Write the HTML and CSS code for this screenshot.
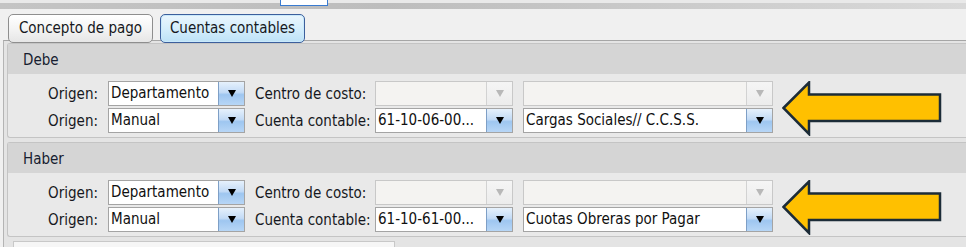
FILE: index.html
```html
<!DOCTYPE html>
<html lang="es">

<head>
    <meta charset="UTF-8">
    <meta name="viewport" content="width=device-width, initial-scale=1.0">
    <title>Cuentas contables</title>
    <link rel="stylesheet" href="styles.css">
</head>

<body>

    <div class="topbar">
        <div class="topbox"></div>
    </div>

    <div class="tabs">
        <span class="tab">Concepto de pago</span>
        <span class="tab active">Cuentas contables</span>
    </div>

    <div class="panel">
        <!-- Debe -->
        <div class="group">
            <div class="group-title">Debe</div>
            <div class="group-body">
                <span class="lbl right">Origen:</span>
                <div class="combo"><span class="combo-text">Departamento</span><span class="combo-btn"></span></div>
                <span class="lbl">Centro de costo:</span>
                <div class="combo off"><span class="combo-text"></span><span class="combo-btn"></span></div>
                <div class="combo off"><span class="combo-text"></span><span class="combo-btn"></span></div>
                <svg class="arrow" width="160" height="55" viewBox="0 0 160 55">
                    <path d="M1.5 27 L27 1.5 L27 13.5 L158 13.5 L158 40 L27 40 L27 53 Z" fill="#ffc000" stroke="#1c2c38" stroke-width="2.5" stroke-linejoin="miter" />
                </svg>

                <span class="lbl right">Origen:</span>
                <div class="combo"><span class="combo-text">Manual</span><span class="combo-btn"></span></div>
                <span class="lbl">Cuenta contable:</span>
                <div class="combo"><span class="combo-text">61-10-06-00...</span><span class="combo-btn"></span></div>
                <div class="combo"><span class="combo-text">Cargas Sociales// C.C.S.S.</span><span class="combo-btn"></span></div>
            </div>
        </div>

        <!-- Haber -->
        <div class="group">
            <div class="group-title">Haber</div>
            <div class="group-body">
                <span class="lbl right">Origen:</span>
                <div class="combo"><span class="combo-text">Departamento</span><span class="combo-btn"></span></div>
                <span class="lbl">Centro de costo:</span>
                <div class="combo off"><span class="combo-text"></span><span class="combo-btn"></span></div>
                <div class="combo off"><span class="combo-text"></span><span class="combo-btn"></span></div>
                <svg class="arrow" width="160" height="55" viewBox="0 0 160 55">
                    <path d="M1.5 27 L27 1.5 L27 13.5 L158 13.5 L158 40 L27 40 L27 53 Z" fill="#ffc000" stroke="#1c2c38" stroke-width="2.5" stroke-linejoin="miter" />
                </svg>

                <span class="lbl right">Origen:</span>
                <div class="combo"><span class="combo-text">Manual</span><span class="combo-btn"></span></div>
                <span class="lbl">Cuenta contable:</span>
                <div class="combo"><span class="combo-text">61-10-61-00...</span><span class="combo-btn"></span></div>
                <div class="combo"><span class="combo-text">Cuotas Obreras por Pagar</span><span class="combo-btn"></span></div>
            </div>
        </div>

        <div class="next"></div>
    </div>

</body>

</html>
```

FILE: styles.css
```css
body {
    margin: 0;
    background-color: #f0f0f0;
    font-family: "DejaVu Sans Condensed", "DejaVu Sans", sans-serif;
    font-stretch: condensed;
    font-size: 15px;
    color: #161821;
    overflow: hidden;
}

.topbar {
    height: 10px;
    padding-left: 280px;
    background:
        linear-gradient(to bottom, #e9e9e9 0 3px, transparent 3px 9px, #f0f0f0 9px),
        linear-gradient(to right, #c4c4c4, #bdbdbd 40%, #d9d9d9);
}

.topbox {
    width: 46px;
    height: 5px;
    border: 1px solid #3a7bd0;
    border-top: none;
    background-color: #fff;
}

.tabs {
    display: flex;
    gap: 7px;
    padding: 4px 0 0 8px;
    margin-bottom: -3px;
    position: relative;
    z-index: 1;
}

.tab {
    box-sizing: border-box;
    height: 29px;
    width: 145px;
    padding-top: 4px;
    text-align: center;
    border: 1px solid #8e8e8e;
    border-radius: 5px;
    background: linear-gradient(#ffffff, #f4f4f4 50%, #e6e6e6);
}

.tab.active {
    border-color: #3c5f9c;
    background: linear-gradient(#eaf6fd, #d5eefc 50%, #bde2f7);
    box-shadow: inset 0 0 0 1px #c9e9fb;
}

.panel {
    margin-left: 3px;
    border-top: 1px solid #a6a6a6;
    border-left: 1px solid #b4b4b4;
    background-color: #e4e4e4;
    padding: 2px 0 0 3px;
}

.group {
    border: 1px solid #c4c4c4;
    border-right: none;
    border-radius: 3px 0 0 3px;
    margin-bottom: 4px;
    background-color: #e9e9e9;
}

.group-title {
    box-sizing: border-box;
    height: 30px;
    line-height: 28px;
    padding: 2px 0 0 15px;
    background-color: #d5d5d5;
    color: #171d30;
}

.group-body {
    display: grid;
    grid-template-columns: 90px 137px 110px 138px 250px 160px;
    grid-template-rows: 25px 25px;
    column-gap: 10px;
    row-gap: 2px;
    padding: 7px 0 4px 0;
    align-items: center;
}

.lbl {
    white-space: nowrap;
}

.lbl.right {
    text-align: right;
}

.combo {
    box-sizing: border-box;
    height: 25px;
    display: flex;
    border: 1px solid #a4a4a4;
    background-color: #fff;
}

.combo-text {
    flex: 1;
    padding-left: 2px;
    line-height: 23px;
    white-space: nowrap;
    overflow: hidden;
    color: #101010;
}

.combo-btn {
    width: 25px;
    display: flex;
    align-items: center;
    justify-content: center;
    border-left: 1px solid #7e9fc6;
    background: linear-gradient(#e6f1fc, #c3dbf6 45%, #9ec6f0 55%, #b7d6f6);
}

.combo-btn::after {
    content: "";
    border-left: 4px solid transparent;
    border-right: 4px solid transparent;
    border-top: 7px solid #000;
}

.combo.off {
    border-color: #c8c8c8;
    background-color: #f4f3f1;
}

.combo.off .combo-btn {
    border-left-color: #d2d2d2;
    background: linear-gradient(#f5f5f5, #ececec);
}

.combo.off .combo-btn::after {
    border-top-color: #b8b8b8;
}

.arrow {
    grid-column: 6;
    grid-row: 1 / span 2;
    margin-top: 3px;
    margin-left: -1px;
}

.next {
    height: 10px;
    width: 380px;
    margin-left: 6px;
    border: 1px solid #c8c8c8;
    border-bottom: none;
    background-color: #f6f6f6;
}
```
